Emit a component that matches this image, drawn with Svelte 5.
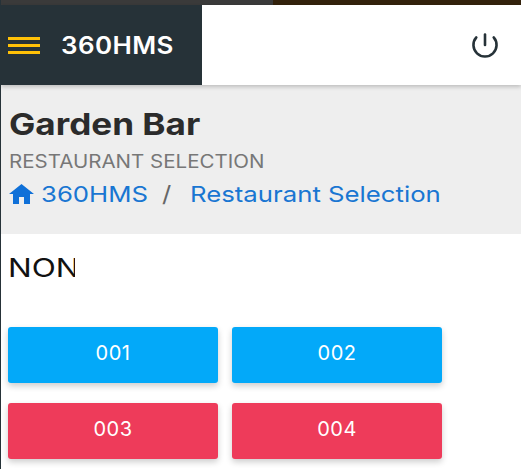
<script>
  const tables = [
    { code: '001', free: true },
    { code: '002', free: true },
    { code: '003', free: false },
    { code: '004', free: false },
  ]
</script>

<div class="page">
  <div class="top-strip"></div>

  <header class="topbar">
    <div class="brand">
      <div class="burger"><span></span><span></span><span></span></div>
      <span class="brand-name">360HMS</span>
    </div>
    <svg class="power" width="30" height="30" viewBox="0 0 30 30" fill="none" stroke="#263238" stroke-width="2.6" stroke-linecap="round">
      <path d="M15 4.500V15" />
      <path d="M6.300 7.400A11.550 11.550 0 1 0 23.700 7.400" />
    </svg>
  </header>

  <section class="title-block">
    <h1>Garden Bar</h1>
    <p class="subtitle">RESTAURANT SELECTION</p>
    <nav class="crumbs">
      <svg width="25" height="20" viewBox="0 0 25 20" fill="#0f70d8"><path d="M12.500 0 L25 10 H21 V20 H15 V13 H10 V20 H4 V10 H0 Z" /></svg>
      <div class="trail">
        <span>360HMS</span>
        <span class="sep">/</span>
        <span>Restaurant Selection</span>
      </div>
    </nav>
  </section>

  <main class="content">
    <h2><span>NON</span></h2>
    <div class="grid">
      {#each tables as t}
        <button class="table" class:free={t.free}>{t.code}</button>
      {/each}
    </div>
  </main>
</div>

<style>
  :global(body) {
    margin: 0;
    background: #fff;
  }

  .page {
    width: 521px;
    height: 469px;
    overflow: hidden;
    font-family: Inter, "Noto Sans", sans-serif;
    border-left: 1px solid #263238;
    box-sizing: border-box;
  }

  .top-strip {
    height: 5px;
    background: linear-gradient(to right, #3a3a3a 0 273px, #33220c 273px);
    margin-left: -1px;
  }

  .topbar {
    height: 80px;
    display: flex;
    justify-content: space-between;
    align-items: center;
    background: #fff;
    box-shadow: 0 2px 4px rgba(0, 0, 0, 0.2);
    position: relative;
  }

  .brand {
    width: 201px;
    height: 100%;
    background: #263238;
    display: flex;
    align-items: center;
    gap: 21px;
    padding-left: 7px;
    box-sizing: border-box;
  }

  .burger {
    width: 32px;
    display: flex;
    flex-direction: column;
    gap: 4px;
  }

  .burger span {
    height: 3px;
    background: #ffc107;
  }

  /* the reference is stretched sideways, hence the scaleX on text */
  .brand-name {
    color: #fff;
    font-size: 24px;
    font-weight: 600;
    letter-spacing: 0.4px;
    transform: scaleX(1.08);
    transform-origin: left;
  }

  .power {
    margin-right: 21px;
  }

  .title-block {
    height: 149px;
    background: #eee;
    padding: 20px 0 0 8px;
    box-sizing: border-box;
  }

  h1 {
    margin: 0;
    font-size: 30px;
    line-height: 38px;
    font-weight: 700;
    color: #2b2b2b;
    transform: scaleX(1.17);
    transform-origin: left;
  }

  .subtitle {
    margin: 8px 0 0;
    font-size: 18px;
    line-height: 22px;
    font-weight: 400;
    color: #777;
    transform: scaleX(1.14);
    transform-origin: left;
  }

  .crumbs {
    display: flex;
    align-items: center;
    margin-top: 7px;
    font-size: 22px;
    line-height: 28px;
    color: #1976d2;
  }

  .trail {
    display: flex;
    margin-left: 7px;
    transform: scaleX(1.17);
    transform-origin: left;
  }

  .sep {
    color: #666;
    margin: 0 16px 0 12px;
  }

  .content {
    padding: 0 0 0 7px;
  }

  h2 {
    margin: 19px 0 0;
    width: 67px;
    overflow: hidden;
    font-size: 25px;
    line-height: 30px;
    font-weight: 400;
    color: #111;
  }

  h2 span {
    display: block;
    transform: scaleX(1.26);
    transform-origin: left;
  }

  .grid {
    display: grid;
    grid-template-columns: 210px 210px;
    gap: 20px 14px;
    margin-top: 44px;
  }

  .table {
    height: 56px;
    padding-bottom: 6px;
    border: none;
    border-radius: 3px;
    background: #ee3b5a;
    color: #fff;
    font-family: Inter, sans-serif;
    font-size: 20px;
    letter-spacing: 0.5px;
    box-shadow: 0 3px 6px rgba(0, 0, 0, 0.2);
  }

  .table.free {
    background: #03a9f9;
  }
</style>
